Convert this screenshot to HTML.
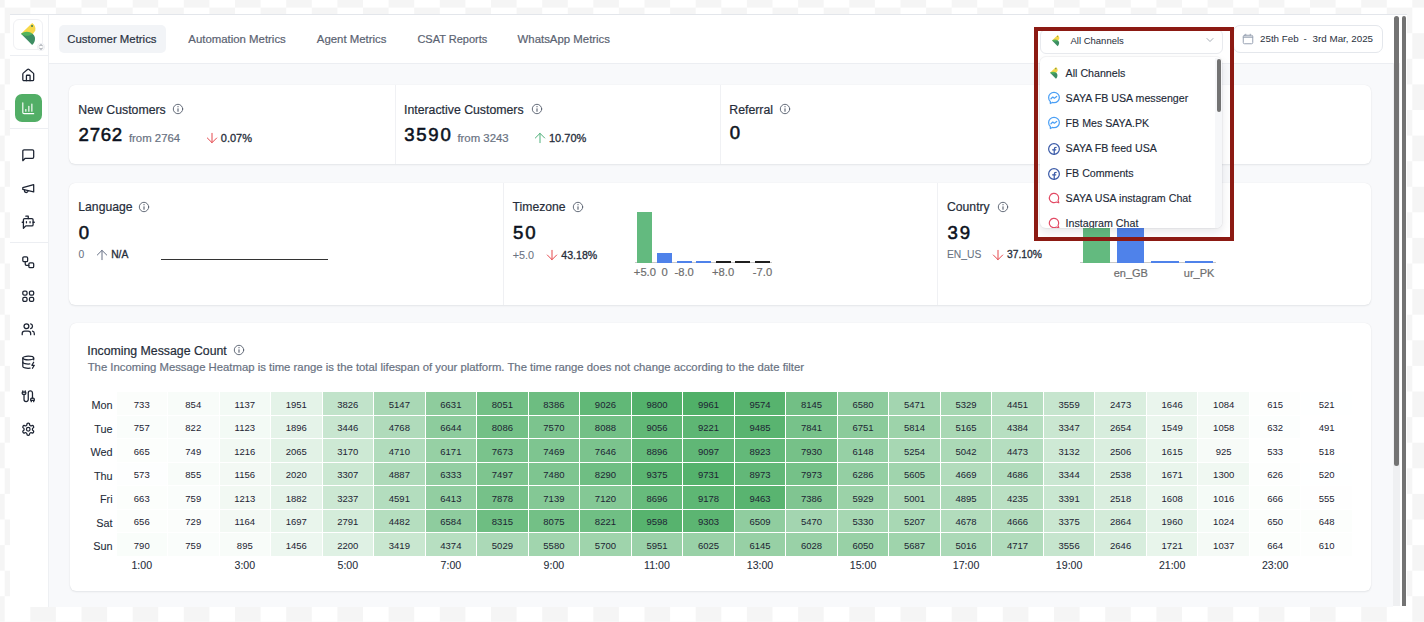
<!DOCTYPE html>
<html><head><meta charset="utf-8"><title>Customer Metrics</title>
<style>
*{margin:0;padding:0;box-sizing:border-box}
html,body{width:1424px;height:622px;overflow:hidden}
body{position:relative;font-family:"Liberation Sans",sans-serif;background-color:#fff;
background-image:conic-gradient(transparent 25%,#f5f5f5 0 50%,transparent 0 75%,#f5f5f5 0);
background-size:51.2px 51.2px;background-position:4.7px 7.6px}
.b{position:absolute}
.t{position:absolute;white-space:nowrap;line-height:1}
svg{position:absolute;overflow:visible}
</style></head><body>

<div class="b" style="left:9.60px;top:14.30px;width:1397.80px;height:592.60px;background:#fff;border-top:1px solid #e3e6eb"></div>
<div class="b" style="left:47.90px;top:15.30px;width:1.00px;height:591.60px;background:#eef0f3"></div>
<div class="b" style="left:48.90px;top:63.50px;width:1343.90px;height:543.50px;background:#f8f9fb"></div>
<div class="b" style="left:48.90px;top:62.80px;width:1343.90px;height:1.00px;background:#eceef2"></div>
<div class="b" style="left:1392.80px;top:63.00px;width:7.10px;height:543.40px;background:#eff0f2"></div>
<div class="b" style="left:1394.00px;top:16.30px;width:5.00px;height:449.40px;background:#737373;border-radius:2.5px"></div>
<div class="b" style="left:1401.60px;top:16.30px;width:4.70px;height:590.10px;background:#737373;border-radius:2.4px 2.4px 0 0"></div>
<div class="b" style="left:9.60px;top:55.00px;width:38.30px;height:1.00px;background:#eceef2"></div>
<div class="b" style="left:9.60px;top:128.00px;width:38.30px;height:1.00px;background:#eceef2"></div>
<div class="b" style="left:9.60px;top:241.90px;width:38.30px;height:1.00px;background:#eceef2"></div>
<div class="b" style="left:13.40px;top:19.20px;width:29.40px;height:30.50px;background:#fff;border:1px solid #f0f1f4;border-radius:6px"></div>
<svg style="left:20.90px;top:22.90px" width="23.00" height="23.00" viewBox="0 0 24 24"><path d="M11.7 0 C14.2 1.6 15.6 5 14.9 7.6 C14.4 9.2 13.2 10.5 12.2 11.5 L0 11.3 Z" fill="#f7d84a"/><path d="M0 11.3 L11.7 23 C14.6 20.5 15 17 14.4 14.6 C14 13.2 13.2 12.2 12.2 11.5 Z" fill="#3d8d63"/><path d="M0 11.3 C3.5 8.6 8.5 8.2 12.2 11.5 C8.6 14 3.6 14.2 0 11.3 Z" fill="#52b35c"/><circle cx="11.5" cy="3.2" r="1.0" fill="#2e7a5c"/></svg>
<div class="b" style="left:36.50px;top:42.90px;width:8.40px;height:8.40px;background:#fff;border:1px solid #eceef2;border-radius:50%"></div>
<svg style="left:36.70px;top:43.10px" width="8" height="8" viewBox="0 0 8 8" fill="none" stroke="#5d6573" stroke-width="0.75" stroke-linecap="round" stroke-linejoin="round" ><path d="M2.6 3.0L4 1.5L5.4 3.0"/><path d="M2.6 5.0L4 6.5L5.4 5.0"/></svg>
<svg style="left:20.95px;top:67.75px" width="14.5" height="14.5" viewBox="0 0 24 24" fill="none" stroke="#1d2433" stroke-width="2.1" stroke-linecap="round" stroke-linejoin="round" ><path d="M15 21v-8a1 1 0 0 0-1-1h-4a1 1 0 0 0-1 1v8"/><path d="M3 10a2 2 0 0 1 .709-1.528l7-5.999a2 2 0 0 1 2.582 0l7 5.999A2 2 0 0 1 21 10v9a2 2 0 0 1-2 2H5a2 2 0 0 1-2-2z"/></svg>
<div class="b" style="left:14.50px;top:94.40px;width:27.30px;height:27.40px;background:#52ae66;border-radius:7px"></div>
<svg style="left:21.05px;top:100.95px" width="14.5" height="14.5" viewBox="0 0 24 24" fill="none" stroke="#fff" stroke-width="1.9" stroke-linecap="round" stroke-linejoin="round" ><path d="M3 3v16a2 2 0 0 0 2 2h16"/><path d="M18 17V5"/><path d="M13 17V9"/><path d="M8 17v-3"/></svg>
<svg style="left:20.95px;top:147.65px" width="14.5" height="14.5" viewBox="0 0 24 24" fill="none" stroke="#1d2433" stroke-width="2.1" stroke-linecap="round" stroke-linejoin="round" ><path d="M21 15a2 2 0 0 1-2 2H7l-4 4V5a2 2 0 0 1 2-2h14a2 2 0 0 1 2 2z"/></svg>
<svg style="left:20.95px;top:181.35px" width="14.5" height="14.5" viewBox="0 0 24 24" fill="none" stroke="#1d2433" stroke-width="2.1" stroke-linecap="round" stroke-linejoin="round" ><path d="m3 11 18-5v12L3 14v-3z"/><path d="M11.6 16.8a3 3 0 1 1-5.8-1.6"/></svg>
<svg style="left:20.95px;top:215.05px" width="14.5" height="14.5" viewBox="0 0 24 24" fill="none" stroke="#1d2433" stroke-width="2.1" stroke-linecap="round" stroke-linejoin="round" ><path d="M12 6V2H8"/><path d="m8 18-4 4V8a2 2 0 0 1 2-2h12a2 2 0 0 1 2 2v8a2 2 0 0 1-2 2Z"/><path d="M2 12h2"/><path d="M9 11v2"/><path d="M15 11v2"/><path d="M20 12h2"/></svg>
<svg style="left:20.95px;top:254.75px" width="14.5" height="14.5" viewBox="0 0 24 24" fill="none" stroke="#1d2433" stroke-width="2.1" stroke-linecap="round" stroke-linejoin="round" ><rect width="8" height="8" x="3" y="3" rx="2"/><path d="M7 11v4a2 2 0 0 0 2 2h4"/><rect width="8" height="8" x="13" y="13" rx="2"/></svg>
<svg style="left:20.95px;top:288.50px" width="14.5" height="14.5" viewBox="0 0 24 24" fill="none" stroke="#1d2433" stroke-width="2.1" stroke-linecap="round" stroke-linejoin="round" ><rect width="7" height="6.4" x="3" y="3.6" rx="2.2"/><rect width="7" height="6.4" x="14" y="3.6" rx="2.2"/><rect width="7" height="6.4" x="14" y="14" rx="2.2"/><rect width="7" height="6.4" x="3" y="14" rx="2.2"/></svg>
<svg style="left:20.95px;top:321.75px" width="14.5" height="14.5" viewBox="0 0 24 24" fill="none" stroke="#1d2433" stroke-width="2.1" stroke-linecap="round" stroke-linejoin="round" ><path d="M16 21v-2a4 4 0 0 0-4-4H6a4 4 0 0 0-4 4v2"/><circle cx="9" cy="7" r="4"/><path d="M22 21v-2a4 4 0 0 0-3-3.87"/><path d="M16 3.13a4 4 0 0 1 0 7.75"/></svg>
<svg style="left:20.95px;top:355.35px" width="14.5" height="14.5" viewBox="0 0 24 24" fill="none" stroke="#1d2433" stroke-width="2.1" stroke-linecap="round" stroke-linejoin="round" ><ellipse cx="12" cy="5" rx="9" ry="3"/><path d="M3 5V19A9 3 0 0 0 15 21.84"/><path d="M21 5V8"/><path d="M21 12L18 17H22L19 22"/><path d="M3 12A9 3 0 0 0 14.59 14.87"/></svg>
<svg style="left:20.95px;top:389.05px" width="14.5" height="14.5" viewBox="0 0 24 24" fill="none" stroke="#1d2433" stroke-width="2.1" stroke-linecap="round" stroke-linejoin="round" ><path d="M17 21v-2a1 1 0 0 1-1-1v-1a2 2 0 0 1 2-2h2a2 2 0 0 1 2 2v1a1 1 0 0 1-1 1"/><path d="M19 15V6.5a1 1 0 0 0-7 0v11a1 1 0 0 1-7 0V9"/><path d="M21 21v-2h-4"/><path d="M3 5h4V3"/><path d="M7 5a1 1 0 0 1 1 1v1a2 2 0 0 1-2 2H4a2 2 0 0 1-2-2V6a1 1 0 0 1 1-1V3"/></svg>
<svg style="left:20.95px;top:421.55px" width="14.5" height="14.5" viewBox="0 0 24 24" fill="none" stroke="#1d2433" stroke-width="2.1" stroke-linecap="round" stroke-linejoin="round" ><path d="M12.22 2h-.44a2 2 0 0 0-2 2v.18a2 2 0 0 1-1 1.73l-.43.25a2 2 0 0 1-2 0l-.15-.08a2 2 0 0 0-2.73.73l-.22.38a2 2 0 0 0 .73 2.73l.15.1a2 2 0 0 1 1 1.72v.51a2 2 0 0 1-1 1.74l-.15.09a2 2 0 0 0-.73 2.73l.22.38a2 2 0 0 0 2.73.73l.15-.08a2 2 0 0 1 2 0l.43.25a2 2 0 0 1 1 1.73V20a2 2 0 0 0 2 2h.44a2 2 0 0 0 2-2v-.18a2 2 0 0 1 1-1.73l.43-.25a2 2 0 0 1 2 0l.15.08a2 2 0 0 0 2.73-.73l.22-.39a2 2 0 0 0-.73-2.73l-.15-.08a2 2 0 0 1-1-1.74v-.5a2 2 0 0 1 1-1.74l.15-.09a2 2 0 0 0 .73-2.73l-.22-.38a2 2 0 0 0-2.73-.73l-.15.08a2 2 0 0 1-2 0l-.43-.25a2 2 0 0 1-1-1.73V4a2 2 0 0 0-2-2z"/><circle cx="12" cy="12" r="3"/></svg>
<div class="b" style="left:59.20px;top:25.20px;width:107.10px;height:27.70px;background:#f2f4f7;border-radius:5px"></div>
<div class="t" style="left:67.30px;top:34.05px;font-size:11.4px;color:#2a3242;font-weight:400;-webkit-text-stroke:0.20px currentColor;">Customer Metrics</div>
<div class="t" style="left:188.30px;top:34.05px;font-size:11.4px;color:#5a6271;font-weight:400;-webkit-text-stroke:0.20px currentColor;">Automation Metrics</div>
<div class="t" style="left:316.80px;top:34.05px;font-size:11.4px;color:#5a6271;font-weight:400;-webkit-text-stroke:0.20px currentColor;">Agent Metrics</div>
<div class="t" style="left:417.40px;top:34.39px;font-size:11.0px;color:#5a6271;font-weight:400;-webkit-text-stroke:0.20px currentColor;">CSAT Reports</div>
<div class="t" style="left:517.60px;top:34.05px;font-size:11.4px;color:#5a6271;font-weight:400;-webkit-text-stroke:0.20px currentColor;">WhatsApp Metrics</div>
<div class="b" style="left:1233.30px;top:25.30px;width:150.10px;height:27.40px;background:#fff;border:1px solid #e4e7ec;border-radius:7px"></div>
<div class="t" style="left:1260.00px;top:34.40px;font-size:9.8px;color:#2a3140;font-weight:400;">25th Feb</div>
<div class="t" style="left:1303.50px;top:34.40px;font-size:9.8px;color:#2a3140;font-weight:400;">-</div>
<div class="t" style="left:1312.60px;top:34.40px;font-size:9.8px;color:#2a3140;font-weight:400;">3rd Mar, 2025</div>
<svg style="left:1241.75px;top:33.05px" width="12" height="12" viewBox="0 0 24 24" fill="none" stroke="#98a2b3" stroke-width="2.0" stroke-linecap="round" stroke-linejoin="round" ><rect x="2.5" y="4.5" width="19" height="17" rx="2.5"/><path d="M3 8.3h18" stroke-width="2.8"/><path d="M7.5 2.4v2"/><path d="M16.5 2.4v2"/></svg>
<div class="b" style="left:69.30px;top:85.30px;width:1301.70px;height:79.00px;background:#fff;border-radius:6px;box-shadow:0 1px 2px rgba(16,24,40,0.08),0 0 1px rgba(16,24,40,0.10)"></div>
<div class="b" style="left:394.70px;top:85.30px;width:1.00px;height:79.00px;background:#f0f1f4"></div>
<div class="b" style="left:720.10px;top:85.30px;width:1.00px;height:79.00px;background:#f0f1f4"></div>
<div class="b" style="left:1045.50px;top:85.30px;width:1.00px;height:79.00px;background:#f0f1f4"></div>
<div class="b" style="left:69.30px;top:182.80px;width:1301.70px;height:121.80px;background:#fff;border-radius:6px;box-shadow:0 1px 2px rgba(16,24,40,0.08),0 0 1px rgba(16,24,40,0.10)"></div>
<div class="b" style="left:503.00px;top:182.80px;width:1.00px;height:121.80px;background:#eff0f3"></div>
<div class="b" style="left:937.00px;top:182.80px;width:1.00px;height:121.80px;background:#f0f1f4"></div>
<div class="b" style="left:69.60px;top:322.60px;width:1301.40px;height:268.40px;background:#fff;border-radius:6px;box-shadow:0 1px 2px rgba(16,24,40,0.08),0 0 1px rgba(16,24,40,0.10)"></div>
<div class="t" style="left:78.30px;top:103.69px;font-size:12.3px;color:#262d3a;font-weight:400;-webkit-text-stroke:0.20px currentColor;">New Customers</div>
<div class="t" style="left:404.00px;top:103.69px;font-size:12.3px;color:#262d3a;font-weight:400;-webkit-text-stroke:0.20px currentColor;">Interactive Customers</div>
<div class="t" style="left:729.30px;top:103.69px;font-size:12.3px;color:#262d3a;font-weight:400;-webkit-text-stroke:0.20px currentColor;">Referral</div>
<div class="t" style="left:78.60px;top:126.36px;font-size:18.6px;color:#0c1220;font-weight:400;-webkit-text-stroke:0.55px currentColor;letter-spacing:0.75px">2762</div>
<div class="t" style="left:128.90px;top:132.75px;font-size:11.4px;color:#697282;font-weight:400;-webkit-text-stroke:0.20px currentColor;">from 2764</div>
<div class="t" style="left:220.80px;top:132.79px;font-size:11px;color:#262d3a;font-weight:400;-webkit-text-stroke:0.30px currentColor;">0.07%</div>
<div class="t" style="left:404.20px;top:126.36px;font-size:18.6px;color:#0c1220;font-weight:400;-webkit-text-stroke:0.55px currentColor;letter-spacing:1.75px">3590</div>
<div class="t" style="left:457.40px;top:132.65px;font-size:11.4px;color:#697282;font-weight:400;-webkit-text-stroke:0.20px currentColor;">from 3243</div>
<div class="t" style="left:549.00px;top:132.79px;font-size:11px;color:#262d3a;font-weight:400;-webkit-text-stroke:0.30px currentColor;">10.70%</div>
<div class="t" style="left:729.80px;top:123.66px;font-size:18.6px;color:#0c1220;font-weight:400;-webkit-text-stroke:0.55px currentColor;">0</div>
<div class="t" style="left:78.30px;top:201.47px;font-size:12.2px;color:#262d3a;font-weight:400;-webkit-text-stroke:0.20px currentColor;">Language</div>
<div class="t" style="left:512.60px;top:201.47px;font-size:12.2px;color:#262d3a;font-weight:400;-webkit-text-stroke:0.20px currentColor;">Timezone</div>
<div class="t" style="left:947.00px;top:201.47px;font-size:12.2px;color:#262d3a;font-weight:400;-webkit-text-stroke:0.20px currentColor;">Country</div>
<div class="t" style="left:78.80px;top:223.96px;font-size:18.6px;color:#0c1220;font-weight:400;-webkit-text-stroke:0.55px currentColor;letter-spacing:0px">0</div>
<div class="t" style="left:513.00px;top:223.96px;font-size:18.6px;color:#0c1220;font-weight:400;-webkit-text-stroke:0.55px currentColor;letter-spacing:1.9px">50</div>
<div class="t" style="left:947.40px;top:223.96px;font-size:18.6px;color:#0c1220;font-weight:400;-webkit-text-stroke:0.55px currentColor;letter-spacing:1.9px">39</div>
<div class="t" style="left:78.50px;top:250.28px;font-size:10.3px;color:#697282;font-weight:400;-webkit-text-stroke:0.08px currentColor;">0</div>
<div class="t" style="left:111.20px;top:249.78px;font-size:10.3px;color:#262d3a;font-weight:400;-webkit-text-stroke:0.30px currentColor;">N/A</div>
<div class="t" style="left:512.80px;top:249.66px;font-size:10.8px;color:#697282;font-weight:400;-webkit-text-stroke:0.08px currentColor;">+5.0</div>
<div class="t" style="left:561.30px;top:249.63px;font-size:10.6px;color:#262d3a;font-weight:400;-webkit-text-stroke:0.30px currentColor;">43.18%</div>
<div class="t" style="left:947.00px;top:249.78px;font-size:10.3px;color:#697282;font-weight:400;-webkit-text-stroke:0.08px currentColor;">EN_US</div>
<div class="t" style="left:1007.00px;top:249.78px;font-size:10.3px;color:#262d3a;font-weight:400;-webkit-text-stroke:0.30px currentColor;">37.10%</div>
<div class="b" style="left:161.00px;top:258.70px;width:166.80px;height:1.40px;background:#333"></div>
<div class="b" style="left:634.80px;top:262.20px;width:136.90px;height:1.00px;background:#c8c8c8"></div>
<div class="b" style="left:637.30px;top:211.90px;width:15.20px;height:51.00px;background:#63ba7f"></div>
<div class="b" style="left:656.90px;top:253.30px;width:15.20px;height:9.60px;background:#4f82ea"></div>
<div class="b" style="left:676.50px;top:261.40px;width:15.20px;height:1.50px;background:#4f82ea"></div>
<div class="b" style="left:695.90px;top:261.40px;width:15.20px;height:1.50px;background:#4f82ea"></div>
<div class="b" style="left:715.50px;top:261.40px;width:15.20px;height:1.50px;background:#1f1f1f"></div>
<div class="b" style="left:735.30px;top:261.40px;width:15.20px;height:1.50px;background:#1f1f1f"></div>
<div class="b" style="left:754.90px;top:261.40px;width:15.20px;height:1.50px;background:#1f1f1f"></div>
<div class="t" style="left:584.90px;width:120px;text-align:center;top:267.32px;font-size:11.2px;color:#6e6e6e;font-weight:400;-webkit-text-stroke:0.20px currentColor;">+5.0</div>
<div class="t" style="left:604.50px;width:120px;text-align:center;top:267.32px;font-size:11.2px;color:#6e6e6e;font-weight:400;-webkit-text-stroke:0.20px currentColor;">0</div>
<div class="t" style="left:624.10px;width:120px;text-align:center;top:267.32px;font-size:11.2px;color:#6e6e6e;font-weight:400;-webkit-text-stroke:0.20px currentColor;">-8.0</div>
<div class="t" style="left:663.10px;width:120px;text-align:center;top:267.32px;font-size:11.2px;color:#6e6e6e;font-weight:400;-webkit-text-stroke:0.20px currentColor;">+8.0</div>
<div class="t" style="left:702.50px;width:120px;text-align:center;top:267.32px;font-size:11.2px;color:#6e6e6e;font-weight:400;-webkit-text-stroke:0.20px currentColor;">-7.0</div>
<div class="b" style="left:1079.50px;top:262.20px;width:136.50px;height:1.00px;background:#c8c8c8"></div>
<div class="b" style="left:1082.70px;top:200.00px;width:27.40px;height:62.90px;background:#63ba7f"></div>
<div class="b" style="left:1117.10px;top:200.00px;width:27.40px;height:62.90px;background:#4f82ea"></div>
<div class="b" style="left:1151.20px;top:261.40px;width:27.40px;height:1.50px;background:#4f82ea"></div>
<div class="b" style="left:1185.40px;top:261.40px;width:27.40px;height:1.50px;background:#4f82ea"></div>
<div class="t" style="left:1070.80px;width:120px;text-align:center;top:267.69px;font-size:11.0px;color:#6e6e6e;font-weight:400;-webkit-text-stroke:0.20px currentColor;">en_GB</div>
<div class="t" style="left:1139.10px;width:120px;text-align:center;top:267.69px;font-size:11.0px;color:#6e6e6e;font-weight:400;-webkit-text-stroke:0.20px currentColor;">ur_PK</div>
<div class="t" style="left:87.30px;top:345.09px;font-size:12.3px;color:#262d3a;font-weight:400;-webkit-text-stroke:0.20px currentColor;">Incoming Message Count</div>
<div class="t" style="left:87.70px;top:361.51px;font-size:11.33px;color:#697282;font-weight:400;-webkit-text-stroke:0.20px currentColor;">The Incoming Message Heatmap is time range is the total lifespan of your platform. The time range does not change according to the date filter</div>
<div class="t" style="left:-7.40px;width:120px;text-align:right;top:400.22px;font-size:10.85px;color:#262d3a;font-weight:400;-webkit-text-stroke:0.08px currentColor;">Mon</div>
<div class="b" style="left:116.50px;top:392.00px;width:50.52px;height:22.50px;background:rgb(251, 253, 251)"></div>
<div class="t" style="left:81.76px;width:120px;text-align:center;top:399.76px;font-size:9.5px;color:#1d2433;font-weight:400;">733</div>
<div class="b" style="left:168.02px;top:392.00px;width:50.52px;height:22.50px;background:rgb(248, 252, 249)"></div>
<div class="t" style="left:133.28px;width:120px;text-align:center;top:399.76px;font-size:9.5px;color:#1d2433;font-weight:400;">854</div>
<div class="b" style="left:219.54px;top:392.00px;width:50.52px;height:22.50px;background:rgb(243, 250, 245)"></div>
<div class="t" style="left:184.80px;width:120px;text-align:center;top:399.76px;font-size:9.5px;color:#1d2433;font-weight:400;">1137</div>
<div class="b" style="left:271.06px;top:392.00px;width:50.52px;height:22.50px;background:rgb(228, 243, 232)"></div>
<div class="t" style="left:236.32px;width:120px;text-align:center;top:399.76px;font-size:9.5px;color:#1d2433;font-weight:400;">1951</div>
<div class="b" style="left:322.58px;top:392.00px;width:50.52px;height:22.50px;background:rgb(193, 227, 202)"></div>
<div class="t" style="left:287.84px;width:120px;text-align:center;top:399.76px;font-size:9.5px;color:#1d2433;font-weight:400;">3826</div>
<div class="b" style="left:374.10px;top:392.00px;width:50.52px;height:22.50px;background:rgb(169, 216, 181)"></div>
<div class="t" style="left:339.36px;width:120px;text-align:center;top:399.76px;font-size:9.5px;color:#1d2433;font-weight:400;">5147</div>
<div class="b" style="left:425.62px;top:392.00px;width:50.52px;height:22.50px;background:rgb(142, 204, 157)"></div>
<div class="t" style="left:390.88px;width:120px;text-align:center;top:399.76px;font-size:9.5px;color:#1d2433;font-weight:400;">6631</div>
<div class="b" style="left:477.14px;top:392.00px;width:50.52px;height:22.50px;background:rgb(115, 192, 134)"></div>
<div class="t" style="left:442.40px;width:120px;text-align:center;top:399.76px;font-size:9.5px;color:#1d2433;font-weight:400;">8051</div>
<div class="b" style="left:528.66px;top:392.00px;width:50.52px;height:22.50px;background:rgb(109, 189, 129)"></div>
<div class="t" style="left:493.92px;width:120px;text-align:center;top:399.76px;font-size:9.5px;color:#1d2433;font-weight:400;">8386</div>
<div class="b" style="left:580.18px;top:392.00px;width:50.52px;height:22.50px;background:rgb(97, 184, 119)"></div>
<div class="t" style="left:545.44px;width:120px;text-align:center;top:399.76px;font-size:9.5px;color:#1d2433;font-weight:400;">9026</div>
<div class="b" style="left:631.70px;top:392.00px;width:50.52px;height:22.50px;background:rgb(83, 177, 107)"></div>
<div class="t" style="left:596.96px;width:120px;text-align:center;top:399.76px;font-size:9.5px;color:#1d2433;font-weight:400;">9800</div>
<div class="b" style="left:683.22px;top:392.00px;width:50.52px;height:22.50px;background:rgb(80, 176, 104)"></div>
<div class="t" style="left:648.48px;width:120px;text-align:center;top:399.76px;font-size:9.5px;color:#1d2433;font-weight:400;">9961</div>
<div class="b" style="left:734.74px;top:392.00px;width:50.52px;height:22.50px;background:rgb(87, 179, 110)"></div>
<div class="t" style="left:700.00px;width:120px;text-align:center;top:399.76px;font-size:9.5px;color:#1d2433;font-weight:400;">9574</div>
<div class="b" style="left:786.26px;top:392.00px;width:50.52px;height:22.50px;background:rgb(114, 191, 133)"></div>
<div class="t" style="left:751.52px;width:120px;text-align:center;top:399.76px;font-size:9.5px;color:#1d2433;font-weight:400;">8145</div>
<div class="b" style="left:837.78px;top:392.00px;width:50.52px;height:22.50px;background:rgb(142, 204, 158)"></div>
<div class="t" style="left:803.04px;width:120px;text-align:center;top:399.76px;font-size:9.5px;color:#1d2433;font-weight:400;">6580</div>
<div class="b" style="left:889.30px;top:392.00px;width:50.52px;height:22.50px;background:rgb(163, 213, 176)"></div>
<div class="t" style="left:854.56px;width:120px;text-align:center;top:399.76px;font-size:9.5px;color:#1d2433;font-weight:400;">5471</div>
<div class="b" style="left:940.82px;top:392.00px;width:50.52px;height:22.50px;background:rgb(166, 215, 178)"></div>
<div class="t" style="left:906.08px;width:120px;text-align:center;top:399.76px;font-size:9.5px;color:#1d2433;font-weight:400;">5329</div>
<div class="b" style="left:992.34px;top:392.00px;width:50.52px;height:22.50px;background:rgb(182, 222, 192)"></div>
<div class="t" style="left:957.60px;width:120px;text-align:center;top:399.76px;font-size:9.5px;color:#1d2433;font-weight:400;">4451</div>
<div class="b" style="left:1043.86px;top:392.00px;width:50.52px;height:22.50px;background:rgb(198, 229, 206)"></div>
<div class="t" style="left:1009.12px;width:120px;text-align:center;top:399.76px;font-size:9.5px;color:#1d2433;font-weight:400;">3559</div>
<div class="b" style="left:1095.38px;top:392.00px;width:50.52px;height:22.50px;background:rgb(218, 238, 223)"></div>
<div class="t" style="left:1060.64px;width:120px;text-align:center;top:399.76px;font-size:9.5px;color:#1d2433;font-weight:400;">2473</div>
<div class="b" style="left:1146.90px;top:392.00px;width:50.52px;height:22.50px;background:rgb(234, 245, 237)"></div>
<div class="t" style="left:1112.16px;width:120px;text-align:center;top:399.76px;font-size:9.5px;color:#1d2433;font-weight:400;">1646</div>
<div class="b" style="left:1198.42px;top:392.00px;width:50.52px;height:22.50px;background:rgb(244, 250, 246)"></div>
<div class="t" style="left:1163.68px;width:120px;text-align:center;top:399.76px;font-size:9.5px;color:#1d2433;font-weight:400;">1084</div>
<div class="b" style="left:1249.94px;top:392.00px;width:50.52px;height:22.50px;background:rgb(253, 254, 253)"></div>
<div class="t" style="left:1215.20px;width:120px;text-align:center;top:399.76px;font-size:9.5px;color:#1d2433;font-weight:400;">615</div>
<div class="b" style="left:1301.46px;top:392.00px;width:50.52px;height:22.50px;background:rgb(254, 255, 255)"></div>
<div class="t" style="left:1266.72px;width:120px;text-align:center;top:399.76px;font-size:9.5px;color:#1d2433;font-weight:400;">521</div>
<div class="t" style="left:-7.40px;width:120px;text-align:right;top:423.72px;font-size:10.85px;color:#262d3a;font-weight:400;-webkit-text-stroke:0.08px currentColor;">Tue</div>
<div class="b" style="left:116.50px;top:415.50px;width:50.52px;height:22.50px;background:rgb(250, 253, 251)"></div>
<div class="t" style="left:81.76px;width:120px;text-align:center;top:423.26px;font-size:9.5px;color:#1d2433;font-weight:400;">757</div>
<div class="b" style="left:168.02px;top:415.50px;width:50.52px;height:22.50px;background:rgb(249, 252, 250)"></div>
<div class="t" style="left:133.28px;width:120px;text-align:center;top:423.26px;font-size:9.5px;color:#1d2433;font-weight:400;">822</div>
<div class="b" style="left:219.54px;top:415.50px;width:50.52px;height:22.50px;background:rgb(243, 250, 245)"></div>
<div class="t" style="left:184.80px;width:120px;text-align:center;top:423.26px;font-size:9.5px;color:#1d2433;font-weight:400;">1123</div>
<div class="b" style="left:271.06px;top:415.50px;width:50.52px;height:22.50px;background:rgb(229, 243, 233)"></div>
<div class="t" style="left:236.32px;width:120px;text-align:center;top:423.26px;font-size:9.5px;color:#1d2433;font-weight:400;">1896</div>
<div class="b" style="left:322.58px;top:415.50px;width:50.52px;height:22.50px;background:rgb(200, 230, 208)"></div>
<div class="t" style="left:287.84px;width:120px;text-align:center;top:423.26px;font-size:9.5px;color:#1d2433;font-weight:400;">3446</div>
<div class="b" style="left:374.10px;top:415.50px;width:50.52px;height:22.50px;background:rgb(176, 219, 187)"></div>
<div class="t" style="left:339.36px;width:120px;text-align:center;top:423.26px;font-size:9.5px;color:#1d2433;font-weight:400;">4768</div>
<div class="b" style="left:425.62px;top:415.50px;width:50.52px;height:22.50px;background:rgb(141, 204, 157)"></div>
<div class="t" style="left:390.88px;width:120px;text-align:center;top:423.26px;font-size:9.5px;color:#1d2433;font-weight:400;">6644</div>
<div class="b" style="left:477.14px;top:415.50px;width:50.52px;height:22.50px;background:rgb(115, 192, 134)"></div>
<div class="t" style="left:442.40px;width:120px;text-align:center;top:423.26px;font-size:9.5px;color:#1d2433;font-weight:400;">8086</div>
<div class="b" style="left:528.66px;top:415.50px;width:50.52px;height:22.50px;background:rgb(124, 196, 142)"></div>
<div class="t" style="left:493.92px;width:120px;text-align:center;top:423.26px;font-size:9.5px;color:#1d2433;font-weight:400;">7570</div>
<div class="b" style="left:580.18px;top:415.50px;width:50.52px;height:22.50px;background:rgb(115, 192, 134)"></div>
<div class="t" style="left:545.44px;width:120px;text-align:center;top:423.26px;font-size:9.5px;color:#1d2433;font-weight:400;">8088</div>
<div class="b" style="left:631.70px;top:415.50px;width:50.52px;height:22.50px;background:rgb(97, 184, 118)"></div>
<div class="t" style="left:596.96px;width:120px;text-align:center;top:423.26px;font-size:9.5px;color:#1d2433;font-weight:400;">9056</div>
<div class="b" style="left:683.22px;top:415.50px;width:50.52px;height:22.50px;background:rgb(94, 182, 116)"></div>
<div class="t" style="left:648.48px;width:120px;text-align:center;top:423.26px;font-size:9.5px;color:#1d2433;font-weight:400;">9221</div>
<div class="b" style="left:734.74px;top:415.50px;width:50.52px;height:22.50px;background:rgb(89, 180, 112)"></div>
<div class="t" style="left:700.00px;width:120px;text-align:center;top:423.26px;font-size:9.5px;color:#1d2433;font-weight:400;">9485</div>
<div class="b" style="left:786.26px;top:415.50px;width:50.52px;height:22.50px;background:rgb(119, 194, 138)"></div>
<div class="t" style="left:751.52px;width:120px;text-align:center;top:423.26px;font-size:9.5px;color:#1d2433;font-weight:400;">7841</div>
<div class="b" style="left:837.78px;top:415.50px;width:50.52px;height:22.50px;background:rgb(139, 203, 155)"></div>
<div class="t" style="left:803.04px;width:120px;text-align:center;top:423.26px;font-size:9.5px;color:#1d2433;font-weight:400;">6751</div>
<div class="b" style="left:889.30px;top:415.50px;width:50.52px;height:22.50px;background:rgb(157, 211, 170)"></div>
<div class="t" style="left:854.56px;width:120px;text-align:center;top:423.26px;font-size:9.5px;color:#1d2433;font-weight:400;">5814</div>
<div class="b" style="left:940.82px;top:415.50px;width:50.52px;height:22.50px;background:rgb(169, 216, 180)"></div>
<div class="t" style="left:906.08px;width:120px;text-align:center;top:423.26px;font-size:9.5px;color:#1d2433;font-weight:400;">5165</div>
<div class="b" style="left:992.34px;top:415.50px;width:50.52px;height:22.50px;background:rgb(183, 223, 193)"></div>
<div class="t" style="left:957.60px;width:120px;text-align:center;top:423.26px;font-size:9.5px;color:#1d2433;font-weight:400;">4384</div>
<div class="b" style="left:1043.86px;top:415.50px;width:50.52px;height:22.50px;background:rgb(202, 231, 209)"></div>
<div class="t" style="left:1009.12px;width:120px;text-align:center;top:423.26px;font-size:9.5px;color:#1d2433;font-weight:400;">3347</div>
<div class="b" style="left:1095.38px;top:415.50px;width:50.52px;height:22.50px;background:rgb(215, 237, 221)"></div>
<div class="t" style="left:1060.64px;width:120px;text-align:center;top:423.26px;font-size:9.5px;color:#1d2433;font-weight:400;">2654</div>
<div class="b" style="left:1146.90px;top:415.50px;width:50.52px;height:22.50px;background:rgb(235, 246, 238)"></div>
<div class="t" style="left:1112.16px;width:120px;text-align:center;top:423.26px;font-size:9.5px;color:#1d2433;font-weight:400;">1549</div>
<div class="b" style="left:1198.42px;top:415.50px;width:50.52px;height:22.50px;background:rgb(245, 250, 246)"></div>
<div class="t" style="left:1163.68px;width:120px;text-align:center;top:423.26px;font-size:9.5px;color:#1d2433;font-weight:400;">1058</div>
<div class="b" style="left:1249.94px;top:415.50px;width:50.52px;height:22.50px;background:rgb(252, 254, 253)"></div>
<div class="t" style="left:1215.20px;width:120px;text-align:center;top:423.26px;font-size:9.5px;color:#1d2433;font-weight:400;">632</div>
<div class="b" style="left:1301.46px;top:415.50px;width:50.52px;height:22.50px;background:rgb(255, 255, 255)"></div>
<div class="t" style="left:1266.72px;width:120px;text-align:center;top:423.26px;font-size:9.5px;color:#1d2433;font-weight:400;">491</div>
<div class="t" style="left:-7.40px;width:120px;text-align:right;top:447.22px;font-size:10.85px;color:#262d3a;font-weight:400;-webkit-text-stroke:0.08px currentColor;">Wed</div>
<div class="b" style="left:116.50px;top:439.00px;width:50.52px;height:22.50px;background:rgb(252, 254, 252)"></div>
<div class="t" style="left:81.76px;width:120px;text-align:center;top:446.76px;font-size:9.5px;color:#1d2433;font-weight:400;">665</div>
<div class="b" style="left:168.02px;top:439.00px;width:50.52px;height:22.50px;background:rgb(250, 253, 251)"></div>
<div class="t" style="left:133.28px;width:120px;text-align:center;top:446.76px;font-size:9.5px;color:#1d2433;font-weight:400;">749</div>
<div class="b" style="left:219.54px;top:439.00px;width:50.52px;height:22.50px;background:rgb(242, 249, 243)"></div>
<div class="t" style="left:184.80px;width:120px;text-align:center;top:446.76px;font-size:9.5px;color:#1d2433;font-weight:400;">1216</div>
<div class="b" style="left:271.06px;top:439.00px;width:50.52px;height:22.50px;background:rgb(226, 242, 230)"></div>
<div class="t" style="left:236.32px;width:120px;text-align:center;top:446.76px;font-size:9.5px;color:#1d2433;font-weight:400;">2065</div>
<div class="b" style="left:322.58px;top:439.00px;width:50.52px;height:22.50px;background:rgb(205, 233, 212)"></div>
<div class="t" style="left:287.84px;width:120px;text-align:center;top:446.76px;font-size:9.5px;color:#1d2433;font-weight:400;">3170</div>
<div class="b" style="left:374.10px;top:439.00px;width:50.52px;height:22.50px;background:rgb(177, 220, 188)"></div>
<div class="t" style="left:339.36px;width:120px;text-align:center;top:446.76px;font-size:9.5px;color:#1d2433;font-weight:400;">4710</div>
<div class="b" style="left:425.62px;top:439.00px;width:50.52px;height:22.50px;background:rgb(150, 208, 164)"></div>
<div class="t" style="left:390.88px;width:120px;text-align:center;top:446.76px;font-size:9.5px;color:#1d2433;font-weight:400;">6171</div>
<div class="b" style="left:477.14px;top:439.00px;width:50.52px;height:22.50px;background:rgb(122, 195, 140)"></div>
<div class="t" style="left:442.40px;width:120px;text-align:center;top:446.76px;font-size:9.5px;color:#1d2433;font-weight:400;">7673</div>
<div class="b" style="left:528.66px;top:439.00px;width:50.52px;height:22.50px;background:rgb(126, 197, 144)"></div>
<div class="t" style="left:493.92px;width:120px;text-align:center;top:446.76px;font-size:9.5px;color:#1d2433;font-weight:400;">7469</div>
<div class="b" style="left:580.18px;top:439.00px;width:50.52px;height:22.50px;background:rgb(123, 195, 141)"></div>
<div class="t" style="left:545.44px;width:120px;text-align:center;top:446.76px;font-size:9.5px;color:#1d2433;font-weight:400;">7646</div>
<div class="b" style="left:631.70px;top:439.00px;width:50.52px;height:22.50px;background:rgb(100, 185, 121)"></div>
<div class="t" style="left:596.96px;width:120px;text-align:center;top:446.76px;font-size:9.5px;color:#1d2433;font-weight:400;">8896</div>
<div class="b" style="left:683.22px;top:439.00px;width:50.52px;height:22.50px;background:rgb(96, 183, 118)"></div>
<div class="t" style="left:648.48px;width:120px;text-align:center;top:446.76px;font-size:9.5px;color:#1d2433;font-weight:400;">9097</div>
<div class="b" style="left:734.74px;top:439.00px;width:50.52px;height:22.50px;background:rgb(99, 185, 121)"></div>
<div class="t" style="left:700.00px;width:120px;text-align:center;top:446.76px;font-size:9.5px;color:#1d2433;font-weight:400;">8923</div>
<div class="b" style="left:786.26px;top:439.00px;width:50.52px;height:22.50px;background:rgb(118, 193, 136)"></div>
<div class="t" style="left:751.52px;width:120px;text-align:center;top:446.76px;font-size:9.5px;color:#1d2433;font-weight:400;">7930</div>
<div class="b" style="left:837.78px;top:439.00px;width:50.52px;height:22.50px;background:rgb(150, 208, 165)"></div>
<div class="t" style="left:803.04px;width:120px;text-align:center;top:446.76px;font-size:9.5px;color:#1d2433;font-weight:400;">6148</div>
<div class="b" style="left:889.30px;top:439.00px;width:50.52px;height:22.50px;background:rgb(167, 215, 179)"></div>
<div class="t" style="left:854.56px;width:120px;text-align:center;top:446.76px;font-size:9.5px;color:#1d2433;font-weight:400;">5254</div>
<div class="b" style="left:940.82px;top:439.00px;width:50.52px;height:22.50px;background:rgb(171, 217, 182)"></div>
<div class="t" style="left:906.08px;width:120px;text-align:center;top:446.76px;font-size:9.5px;color:#1d2433;font-weight:400;">5042</div>
<div class="b" style="left:992.34px;top:439.00px;width:50.52px;height:22.50px;background:rgb(181, 222, 192)"></div>
<div class="t" style="left:957.60px;width:120px;text-align:center;top:446.76px;font-size:9.5px;color:#1d2433;font-weight:400;">4473</div>
<div class="b" style="left:1043.86px;top:439.00px;width:50.52px;height:22.50px;background:rgb(206, 233, 213)"></div>
<div class="t" style="left:1009.12px;width:120px;text-align:center;top:446.76px;font-size:9.5px;color:#1d2433;font-weight:400;">3132</div>
<div class="b" style="left:1095.38px;top:439.00px;width:50.52px;height:22.50px;background:rgb(218, 238, 223)"></div>
<div class="t" style="left:1060.64px;width:120px;text-align:center;top:446.76px;font-size:9.5px;color:#1d2433;font-weight:400;">2506</div>
<div class="b" style="left:1146.90px;top:439.00px;width:50.52px;height:22.50px;background:rgb(234, 246, 237)"></div>
<div class="t" style="left:1112.16px;width:120px;text-align:center;top:446.76px;font-size:9.5px;color:#1d2433;font-weight:400;">1615</div>
<div class="b" style="left:1198.42px;top:439.00px;width:50.52px;height:22.50px;background:rgb(247, 251, 248)"></div>
<div class="t" style="left:1163.68px;width:120px;text-align:center;top:446.76px;font-size:9.5px;color:#1d2433;font-weight:400;">925</div>
<div class="b" style="left:1249.94px;top:439.00px;width:50.52px;height:22.50px;background:rgb(254, 255, 254)"></div>
<div class="t" style="left:1215.20px;width:120px;text-align:center;top:446.76px;font-size:9.5px;color:#1d2433;font-weight:400;">533</div>
<div class="b" style="left:1301.46px;top:439.00px;width:50.52px;height:22.50px;background:rgb(255, 255, 255)"></div>
<div class="t" style="left:1266.72px;width:120px;text-align:center;top:446.76px;font-size:9.5px;color:#1d2433;font-weight:400;">518</div>
<div class="t" style="left:-7.40px;width:120px;text-align:right;top:470.72px;font-size:10.85px;color:#262d3a;font-weight:400;-webkit-text-stroke:0.08px currentColor;">Thu</div>
<div class="b" style="left:116.50px;top:462.50px;width:50.52px;height:22.50px;background:rgb(253, 254, 254)"></div>
<div class="t" style="left:81.76px;width:120px;text-align:center;top:470.26px;font-size:9.5px;color:#1d2433;font-weight:400;">573</div>
<div class="b" style="left:168.02px;top:462.50px;width:50.52px;height:22.50px;background:rgb(248, 252, 249)"></div>
<div class="t" style="left:133.28px;width:120px;text-align:center;top:470.26px;font-size:9.5px;color:#1d2433;font-weight:400;">855</div>
<div class="b" style="left:219.54px;top:462.50px;width:50.52px;height:22.50px;background:rgb(243, 249, 244)"></div>
<div class="t" style="left:184.80px;width:120px;text-align:center;top:470.26px;font-size:9.5px;color:#1d2433;font-weight:400;">1156</div>
<div class="b" style="left:271.06px;top:462.50px;width:50.52px;height:22.50px;background:rgb(227, 242, 231)"></div>
<div class="t" style="left:236.32px;width:120px;text-align:center;top:470.26px;font-size:9.5px;color:#1d2433;font-weight:400;">2020</div>
<div class="b" style="left:322.58px;top:462.50px;width:50.52px;height:22.50px;background:rgb(203, 232, 210)"></div>
<div class="t" style="left:287.84px;width:120px;text-align:center;top:470.26px;font-size:9.5px;color:#1d2433;font-weight:400;">3307</div>
<div class="b" style="left:374.10px;top:462.50px;width:50.52px;height:22.50px;background:rgb(174, 218, 185)"></div>
<div class="t" style="left:339.36px;width:120px;text-align:center;top:470.26px;font-size:9.5px;color:#1d2433;font-weight:400;">4887</div>
<div class="b" style="left:425.62px;top:462.50px;width:50.52px;height:22.50px;background:rgb(147, 206, 162)"></div>
<div class="t" style="left:390.88px;width:120px;text-align:center;top:470.26px;font-size:9.5px;color:#1d2433;font-weight:400;">6333</div>
<div class="b" style="left:477.14px;top:462.50px;width:50.52px;height:22.50px;background:rgb(126, 197, 143)"></div>
<div class="t" style="left:442.40px;width:120px;text-align:center;top:470.26px;font-size:9.5px;color:#1d2433;font-weight:400;">7497</div>
<div class="b" style="left:528.66px;top:462.50px;width:50.52px;height:22.50px;background:rgb(126, 197, 144)"></div>
<div class="t" style="left:493.92px;width:120px;text-align:center;top:470.26px;font-size:9.5px;color:#1d2433;font-weight:400;">7480</div>
<div class="b" style="left:580.18px;top:462.50px;width:50.52px;height:22.50px;background:rgb(111, 190, 131)"></div>
<div class="t" style="left:545.44px;width:120px;text-align:center;top:470.26px;font-size:9.5px;color:#1d2433;font-weight:400;">8290</div>
<div class="b" style="left:631.70px;top:462.50px;width:50.52px;height:22.50px;background:rgb(91, 181, 113)"></div>
<div class="t" style="left:596.96px;width:120px;text-align:center;top:470.26px;font-size:9.5px;color:#1d2433;font-weight:400;">9375</div>
<div class="b" style="left:683.22px;top:462.50px;width:50.52px;height:22.50px;background:rgb(84, 178, 108)"></div>
<div class="t" style="left:648.48px;width:120px;text-align:center;top:470.26px;font-size:9.5px;color:#1d2433;font-weight:400;">9731</div>
<div class="b" style="left:734.74px;top:462.50px;width:50.52px;height:22.50px;background:rgb(98, 184, 120)"></div>
<div class="t" style="left:700.00px;width:120px;text-align:center;top:470.26px;font-size:9.5px;color:#1d2433;font-weight:400;">8973</div>
<div class="b" style="left:786.26px;top:462.50px;width:50.52px;height:22.50px;background:rgb(117, 193, 136)"></div>
<div class="t" style="left:751.52px;width:120px;text-align:center;top:470.26px;font-size:9.5px;color:#1d2433;font-weight:400;">7973</div>
<div class="b" style="left:837.78px;top:462.50px;width:50.52px;height:22.50px;background:rgb(148, 207, 163)"></div>
<div class="t" style="left:803.04px;width:120px;text-align:center;top:470.26px;font-size:9.5px;color:#1d2433;font-weight:400;">6286</div>
<div class="b" style="left:889.30px;top:462.50px;width:50.52px;height:22.50px;background:rgb(160, 212, 173)"></div>
<div class="t" style="left:854.56px;width:120px;text-align:center;top:470.26px;font-size:9.5px;color:#1d2433;font-weight:400;">5605</div>
<div class="b" style="left:940.82px;top:462.50px;width:50.52px;height:22.50px;background:rgb(178, 220, 188)"></div>
<div class="t" style="left:906.08px;width:120px;text-align:center;top:470.26px;font-size:9.5px;color:#1d2433;font-weight:400;">4669</div>
<div class="b" style="left:992.34px;top:462.50px;width:50.52px;height:22.50px;background:rgb(177, 220, 188)"></div>
<div class="t" style="left:957.60px;width:120px;text-align:center;top:470.26px;font-size:9.5px;color:#1d2433;font-weight:400;">4686</div>
<div class="b" style="left:1043.86px;top:462.50px;width:50.52px;height:22.50px;background:rgb(202, 231, 210)"></div>
<div class="t" style="left:1009.12px;width:120px;text-align:center;top:470.26px;font-size:9.5px;color:#1d2433;font-weight:400;">3344</div>
<div class="b" style="left:1095.38px;top:462.50px;width:50.52px;height:22.50px;background:rgb(217, 238, 222)"></div>
<div class="t" style="left:1060.64px;width:120px;text-align:center;top:470.26px;font-size:9.5px;color:#1d2433;font-weight:400;">2538</div>
<div class="b" style="left:1146.90px;top:462.50px;width:50.52px;height:22.50px;background:rgb(233, 245, 236)"></div>
<div class="t" style="left:1112.16px;width:120px;text-align:center;top:470.26px;font-size:9.5px;color:#1d2433;font-weight:400;">1671</div>
<div class="b" style="left:1198.42px;top:462.50px;width:50.52px;height:22.50px;background:rgb(240, 248, 242)"></div>
<div class="t" style="left:1163.68px;width:120px;text-align:center;top:470.26px;font-size:9.5px;color:#1d2433;font-weight:400;">1300</div>
<div class="b" style="left:1249.94px;top:462.50px;width:50.52px;height:22.50px;background:rgb(253, 254, 253)"></div>
<div class="t" style="left:1215.20px;width:120px;text-align:center;top:470.26px;font-size:9.5px;color:#1d2433;font-weight:400;">626</div>
<div class="b" style="left:1301.46px;top:462.50px;width:50.52px;height:22.50px;background:rgb(254, 255, 255)"></div>
<div class="t" style="left:1266.72px;width:120px;text-align:center;top:470.26px;font-size:9.5px;color:#1d2433;font-weight:400;">520</div>
<div class="t" style="left:-7.40px;width:120px;text-align:right;top:494.22px;font-size:10.85px;color:#262d3a;font-weight:400;-webkit-text-stroke:0.08px currentColor;">Fri</div>
<div class="b" style="left:116.50px;top:486.00px;width:50.52px;height:22.50px;background:rgb(252, 254, 252)"></div>
<div class="t" style="left:81.76px;width:120px;text-align:center;top:493.76px;font-size:9.5px;color:#1d2433;font-weight:400;">663</div>
<div class="b" style="left:168.02px;top:486.00px;width:50.52px;height:22.50px;background:rgb(250, 253, 251)"></div>
<div class="t" style="left:133.28px;width:120px;text-align:center;top:493.76px;font-size:9.5px;color:#1d2433;font-weight:400;">759</div>
<div class="b" style="left:219.54px;top:486.00px;width:50.52px;height:22.50px;background:rgb(242, 249, 243)"></div>
<div class="t" style="left:184.80px;width:120px;text-align:center;top:493.76px;font-size:9.5px;color:#1d2433;font-weight:400;">1213</div>
<div class="b" style="left:271.06px;top:486.00px;width:50.52px;height:22.50px;background:rgb(229, 243, 233)"></div>
<div class="t" style="left:236.32px;width:120px;text-align:center;top:493.76px;font-size:9.5px;color:#1d2433;font-weight:400;">1882</div>
<div class="b" style="left:322.58px;top:486.00px;width:50.52px;height:22.50px;background:rgb(204, 232, 211)"></div>
<div class="t" style="left:287.84px;width:120px;text-align:center;top:493.76px;font-size:9.5px;color:#1d2433;font-weight:400;">3237</div>
<div class="b" style="left:374.10px;top:486.00px;width:50.52px;height:22.50px;background:rgb(179, 221, 190)"></div>
<div class="t" style="left:339.36px;width:120px;text-align:center;top:493.76px;font-size:9.5px;color:#1d2433;font-weight:400;">4591</div>
<div class="b" style="left:425.62px;top:486.00px;width:50.52px;height:22.50px;background:rgb(146, 206, 161)"></div>
<div class="t" style="left:390.88px;width:120px;text-align:center;top:493.76px;font-size:9.5px;color:#1d2433;font-weight:400;">6413</div>
<div class="b" style="left:477.14px;top:486.00px;width:50.52px;height:22.50px;background:rgb(118, 193, 137)"></div>
<div class="t" style="left:442.40px;width:120px;text-align:center;top:493.76px;font-size:9.5px;color:#1d2433;font-weight:400;">7878</div>
<div class="b" style="left:528.66px;top:486.00px;width:50.52px;height:22.50px;background:rgb(132, 200, 149)"></div>
<div class="t" style="left:493.92px;width:120px;text-align:center;top:493.76px;font-size:9.5px;color:#1d2433;font-weight:400;">7139</div>
<div class="b" style="left:580.18px;top:486.00px;width:50.52px;height:22.50px;background:rgb(132, 200, 149)"></div>
<div class="t" style="left:545.44px;width:120px;text-align:center;top:493.76px;font-size:9.5px;color:#1d2433;font-weight:400;">7120</div>
<div class="b" style="left:631.70px;top:486.00px;width:50.52px;height:22.50px;background:rgb(103, 187, 124)"></div>
<div class="t" style="left:596.96px;width:120px;text-align:center;top:493.76px;font-size:9.5px;color:#1d2433;font-weight:400;">8696</div>
<div class="b" style="left:683.22px;top:486.00px;width:50.52px;height:22.50px;background:rgb(94, 183, 116)"></div>
<div class="t" style="left:648.48px;width:120px;text-align:center;top:493.76px;font-size:9.5px;color:#1d2433;font-weight:400;">9178</div>
<div class="b" style="left:734.74px;top:486.00px;width:50.52px;height:22.50px;background:rgb(89, 180, 112)"></div>
<div class="t" style="left:700.00px;width:120px;text-align:center;top:493.76px;font-size:9.5px;color:#1d2433;font-weight:400;">9463</div>
<div class="b" style="left:786.26px;top:486.00px;width:50.52px;height:22.50px;background:rgb(128, 197, 145)"></div>
<div class="t" style="left:751.52px;width:120px;text-align:center;top:493.76px;font-size:9.5px;color:#1d2433;font-weight:400;">7386</div>
<div class="b" style="left:837.78px;top:486.00px;width:50.52px;height:22.50px;background:rgb(155, 210, 168)"></div>
<div class="t" style="left:803.04px;width:120px;text-align:center;top:493.76px;font-size:9.5px;color:#1d2433;font-weight:400;">5929</div>
<div class="b" style="left:889.30px;top:486.00px;width:50.52px;height:22.50px;background:rgb(172, 217, 183)"></div>
<div class="t" style="left:854.56px;width:120px;text-align:center;top:493.76px;font-size:9.5px;color:#1d2433;font-weight:400;">5001</div>
<div class="b" style="left:940.82px;top:486.00px;width:50.52px;height:22.50px;background:rgb(174, 218, 185)"></div>
<div class="t" style="left:906.08px;width:120px;text-align:center;top:493.76px;font-size:9.5px;color:#1d2433;font-weight:400;">4895</div>
<div class="b" style="left:992.34px;top:486.00px;width:50.52px;height:22.50px;background:rgb(186, 224, 195)"></div>
<div class="t" style="left:957.60px;width:120px;text-align:center;top:493.76px;font-size:9.5px;color:#1d2433;font-weight:400;">4235</div>
<div class="b" style="left:1043.86px;top:486.00px;width:50.52px;height:22.50px;background:rgb(201, 231, 209)"></div>
<div class="t" style="left:1009.12px;width:120px;text-align:center;top:493.76px;font-size:9.5px;color:#1d2433;font-weight:400;">3391</div>
<div class="b" style="left:1095.38px;top:486.00px;width:50.52px;height:22.50px;background:rgb(218, 238, 223)"></div>
<div class="t" style="left:1060.64px;width:120px;text-align:center;top:493.76px;font-size:9.5px;color:#1d2433;font-weight:400;">2518</div>
<div class="b" style="left:1146.90px;top:486.00px;width:50.52px;height:22.50px;background:rgb(234, 246, 237)"></div>
<div class="t" style="left:1112.16px;width:120px;text-align:center;top:493.76px;font-size:9.5px;color:#1d2433;font-weight:400;">1608</div>
<div class="b" style="left:1198.42px;top:486.00px;width:50.52px;height:22.50px;background:rgb(245, 251, 247)"></div>
<div class="t" style="left:1163.68px;width:120px;text-align:center;top:493.76px;font-size:9.5px;color:#1d2433;font-weight:400;">1016</div>
<div class="b" style="left:1249.94px;top:486.00px;width:50.52px;height:22.50px;background:rgb(252, 254, 252)"></div>
<div class="t" style="left:1215.20px;width:120px;text-align:center;top:493.76px;font-size:9.5px;color:#1d2433;font-weight:400;">666</div>
<div class="b" style="left:1301.46px;top:486.00px;width:50.52px;height:22.50px;background:rgb(254, 254, 254)"></div>
<div class="t" style="left:1266.72px;width:120px;text-align:center;top:493.76px;font-size:9.5px;color:#1d2433;font-weight:400;">555</div>
<div class="t" style="left:-7.40px;width:120px;text-align:right;top:517.72px;font-size:10.85px;color:#262d3a;font-weight:400;-webkit-text-stroke:0.08px currentColor;">Sat</div>
<div class="b" style="left:116.50px;top:509.50px;width:50.52px;height:22.50px;background:rgb(252, 254, 252)"></div>
<div class="t" style="left:81.76px;width:120px;text-align:center;top:517.26px;font-size:9.5px;color:#1d2433;font-weight:400;">656</div>
<div class="b" style="left:168.02px;top:509.50px;width:50.52px;height:22.50px;background:rgb(251, 253, 251)"></div>
<div class="t" style="left:133.28px;width:120px;text-align:center;top:517.26px;font-size:9.5px;color:#1d2433;font-weight:400;">729</div>
<div class="b" style="left:219.54px;top:509.50px;width:50.52px;height:22.50px;background:rgb(243, 249, 244)"></div>
<div class="t" style="left:184.80px;width:120px;text-align:center;top:517.26px;font-size:9.5px;color:#1d2433;font-weight:400;">1164</div>
<div class="b" style="left:271.06px;top:509.50px;width:50.52px;height:22.50px;background:rgb(233, 245, 236)"></div>
<div class="t" style="left:236.32px;width:120px;text-align:center;top:517.26px;font-size:9.5px;color:#1d2433;font-weight:400;">1697</div>
<div class="b" style="left:322.58px;top:509.50px;width:50.52px;height:22.50px;background:rgb(212, 236, 218)"></div>
<div class="t" style="left:287.84px;width:120px;text-align:center;top:517.26px;font-size:9.5px;color:#1d2433;font-weight:400;">2791</div>
<div class="b" style="left:374.10px;top:509.50px;width:50.52px;height:22.50px;background:rgb(181, 222, 191)"></div>
<div class="t" style="left:339.36px;width:120px;text-align:center;top:517.26px;font-size:9.5px;color:#1d2433;font-weight:400;">4482</div>
<div class="b" style="left:425.62px;top:509.50px;width:50.52px;height:22.50px;background:rgb(142, 204, 158)"></div>
<div class="t" style="left:390.88px;width:120px;text-align:center;top:517.26px;font-size:9.5px;color:#1d2433;font-weight:400;">6584</div>
<div class="b" style="left:477.14px;top:509.50px;width:50.52px;height:22.50px;background:rgb(110, 190, 130)"></div>
<div class="t" style="left:442.40px;width:120px;text-align:center;top:517.26px;font-size:9.5px;color:#1d2433;font-weight:400;">8315</div>
<div class="b" style="left:528.66px;top:509.50px;width:50.52px;height:22.50px;background:rgb(115, 192, 134)"></div>
<div class="t" style="left:493.92px;width:120px;text-align:center;top:517.26px;font-size:9.5px;color:#1d2433;font-weight:400;">8075</div>
<div class="b" style="left:580.18px;top:509.50px;width:50.52px;height:22.50px;background:rgb(112, 191, 132)"></div>
<div class="t" style="left:545.44px;width:120px;text-align:center;top:517.26px;font-size:9.5px;color:#1d2433;font-weight:400;">8221</div>
<div class="b" style="left:631.70px;top:509.50px;width:50.52px;height:22.50px;background:rgb(87, 179, 110)"></div>
<div class="t" style="left:596.96px;width:120px;text-align:center;top:517.26px;font-size:9.5px;color:#1d2433;font-weight:400;">9598</div>
<div class="b" style="left:683.22px;top:509.50px;width:50.52px;height:22.50px;background:rgb(92, 181, 114)"></div>
<div class="t" style="left:648.48px;width:120px;text-align:center;top:517.26px;font-size:9.5px;color:#1d2433;font-weight:400;">9303</div>
<div class="b" style="left:734.74px;top:509.50px;width:50.52px;height:22.50px;background:rgb(144, 205, 159)"></div>
<div class="t" style="left:700.00px;width:120px;text-align:center;top:517.26px;font-size:9.5px;color:#1d2433;font-weight:400;">6509</div>
<div class="b" style="left:786.26px;top:509.50px;width:50.52px;height:22.50px;background:rgb(163, 213, 176)"></div>
<div class="t" style="left:751.52px;width:120px;text-align:center;top:517.26px;font-size:9.5px;color:#1d2433;font-weight:400;">5470</div>
<div class="b" style="left:837.78px;top:509.50px;width:50.52px;height:22.50px;background:rgb(166, 215, 178)"></div>
<div class="t" style="left:803.04px;width:120px;text-align:center;top:517.26px;font-size:9.5px;color:#1d2433;font-weight:400;">5330</div>
<div class="b" style="left:889.30px;top:509.50px;width:50.52px;height:22.50px;background:rgb(168, 216, 180)"></div>
<div class="t" style="left:854.56px;width:120px;text-align:center;top:517.26px;font-size:9.5px;color:#1d2433;font-weight:400;">5207</div>
<div class="b" style="left:940.82px;top:509.50px;width:50.52px;height:22.50px;background:rgb(178, 220, 188)"></div>
<div class="t" style="left:906.08px;width:120px;text-align:center;top:517.26px;font-size:9.5px;color:#1d2433;font-weight:400;">4678</div>
<div class="b" style="left:992.34px;top:509.50px;width:50.52px;height:22.50px;background:rgb(178, 220, 188)"></div>
<div class="t" style="left:957.60px;width:120px;text-align:center;top:517.26px;font-size:9.5px;color:#1d2433;font-weight:400;">4666</div>
<div class="b" style="left:1043.86px;top:509.50px;width:50.52px;height:22.50px;background:rgb(202, 231, 209)"></div>
<div class="t" style="left:1009.12px;width:120px;text-align:center;top:517.26px;font-size:9.5px;color:#1d2433;font-weight:400;">3375</div>
<div class="b" style="left:1095.38px;top:509.50px;width:50.52px;height:22.50px;background:rgb(211, 235, 217)"></div>
<div class="t" style="left:1060.64px;width:120px;text-align:center;top:517.26px;font-size:9.5px;color:#1d2433;font-weight:400;">2864</div>
<div class="b" style="left:1146.90px;top:509.50px;width:50.52px;height:22.50px;background:rgb(228, 243, 232)"></div>
<div class="t" style="left:1112.16px;width:120px;text-align:center;top:517.26px;font-size:9.5px;color:#1d2433;font-weight:400;">1960</div>
<div class="b" style="left:1198.42px;top:509.50px;width:50.52px;height:22.50px;background:rgb(245, 251, 247)"></div>
<div class="t" style="left:1163.68px;width:120px;text-align:center;top:517.26px;font-size:9.5px;color:#1d2433;font-weight:400;">1024</div>
<div class="b" style="left:1249.94px;top:509.50px;width:50.52px;height:22.50px;background:rgb(252, 254, 252)"></div>
<div class="t" style="left:1215.20px;width:120px;text-align:center;top:517.26px;font-size:9.5px;color:#1d2433;font-weight:400;">650</div>
<div class="b" style="left:1301.46px;top:509.50px;width:50.52px;height:22.50px;background:rgb(252, 254, 252)"></div>
<div class="t" style="left:1266.72px;width:120px;text-align:center;top:517.26px;font-size:9.5px;color:#1d2433;font-weight:400;">648</div>
<div class="t" style="left:-7.40px;width:120px;text-align:right;top:541.22px;font-size:10.85px;color:#262d3a;font-weight:400;-webkit-text-stroke:0.08px currentColor;">Sun</div>
<div class="b" style="left:116.50px;top:533.00px;width:50.52px;height:22.50px;background:rgb(249, 253, 250)"></div>
<div class="t" style="left:81.76px;width:120px;text-align:center;top:540.76px;font-size:9.5px;color:#1d2433;font-weight:400;">790</div>
<div class="b" style="left:168.02px;top:533.00px;width:50.52px;height:22.50px;background:rgb(250, 253, 251)"></div>
<div class="t" style="left:133.28px;width:120px;text-align:center;top:540.76px;font-size:9.5px;color:#1d2433;font-weight:400;">759</div>
<div class="b" style="left:219.54px;top:533.00px;width:50.52px;height:22.50px;background:rgb(248, 252, 249)"></div>
<div class="t" style="left:184.80px;width:120px;text-align:center;top:540.76px;font-size:9.5px;color:#1d2433;font-weight:400;">895</div>
<div class="b" style="left:271.06px;top:533.00px;width:50.52px;height:22.50px;background:rgb(237, 247, 240)"></div>
<div class="t" style="left:236.32px;width:120px;text-align:center;top:540.76px;font-size:9.5px;color:#1d2433;font-weight:400;">1456</div>
<div class="b" style="left:322.58px;top:533.00px;width:50.52px;height:22.50px;background:rgb(223, 241, 228)"></div>
<div class="t" style="left:287.84px;width:120px;text-align:center;top:540.76px;font-size:9.5px;color:#1d2433;font-weight:400;">2200</div>
<div class="b" style="left:374.10px;top:533.00px;width:50.52px;height:22.50px;background:rgb(201, 231, 208)"></div>
<div class="t" style="left:339.36px;width:120px;text-align:center;top:540.76px;font-size:9.5px;color:#1d2433;font-weight:400;">3419</div>
<div class="b" style="left:425.62px;top:533.00px;width:50.52px;height:22.50px;background:rgb(183, 223, 193)"></div>
<div class="t" style="left:390.88px;width:120px;text-align:center;top:540.76px;font-size:9.5px;color:#1d2433;font-weight:400;">4374</div>
<div class="b" style="left:477.14px;top:533.00px;width:50.52px;height:22.50px;background:rgb(171, 217, 183)"></div>
<div class="t" style="left:442.40px;width:120px;text-align:center;top:540.76px;font-size:9.5px;color:#1d2433;font-weight:400;">5029</div>
<div class="b" style="left:528.66px;top:533.00px;width:50.52px;height:22.50px;background:rgb(161, 213, 174)"></div>
<div class="t" style="left:493.92px;width:120px;text-align:center;top:540.76px;font-size:9.5px;color:#1d2433;font-weight:400;">5580</div>
<div class="b" style="left:580.18px;top:533.00px;width:50.52px;height:22.50px;background:rgb(159, 212, 172)"></div>
<div class="t" style="left:545.44px;width:120px;text-align:center;top:540.76px;font-size:9.5px;color:#1d2433;font-weight:400;">5700</div>
<div class="b" style="left:631.70px;top:533.00px;width:50.52px;height:22.50px;background:rgb(154, 209, 168)"></div>
<div class="t" style="left:596.96px;width:120px;text-align:center;top:540.76px;font-size:9.5px;color:#1d2433;font-weight:400;">5951</div>
<div class="b" style="left:683.22px;top:533.00px;width:50.52px;height:22.50px;background:rgb(153, 209, 167)"></div>
<div class="t" style="left:648.48px;width:120px;text-align:center;top:540.76px;font-size:9.5px;color:#1d2433;font-weight:400;">6025</div>
<div class="b" style="left:734.74px;top:533.00px;width:50.52px;height:22.50px;background:rgb(151, 208, 165)"></div>
<div class="t" style="left:700.00px;width:120px;text-align:center;top:540.76px;font-size:9.5px;color:#1d2433;font-weight:400;">6145</div>
<div class="b" style="left:786.26px;top:533.00px;width:50.52px;height:22.50px;background:rgb(153, 209, 167)"></div>
<div class="t" style="left:751.52px;width:120px;text-align:center;top:540.76px;font-size:9.5px;color:#1d2433;font-weight:400;">6028</div>
<div class="b" style="left:837.78px;top:533.00px;width:50.52px;height:22.50px;background:rgb(152, 209, 166)"></div>
<div class="t" style="left:803.04px;width:120px;text-align:center;top:540.76px;font-size:9.5px;color:#1d2433;font-weight:400;">6050</div>
<div class="b" style="left:889.30px;top:533.00px;width:50.52px;height:22.50px;background:rgb(159, 212, 172)"></div>
<div class="t" style="left:854.56px;width:120px;text-align:center;top:540.76px;font-size:9.5px;color:#1d2433;font-weight:400;">5687</div>
<div class="b" style="left:940.82px;top:533.00px;width:50.52px;height:22.50px;background:rgb(171, 217, 183)"></div>
<div class="t" style="left:906.08px;width:120px;text-align:center;top:540.76px;font-size:9.5px;color:#1d2433;font-weight:400;">5016</div>
<div class="b" style="left:992.34px;top:533.00px;width:50.52px;height:22.50px;background:rgb(177, 220, 188)"></div>
<div class="t" style="left:957.60px;width:120px;text-align:center;top:540.76px;font-size:9.5px;color:#1d2433;font-weight:400;">4717</div>
<div class="b" style="left:1043.86px;top:533.00px;width:50.52px;height:22.50px;background:rgb(198, 229, 206)"></div>
<div class="t" style="left:1009.12px;width:120px;text-align:center;top:540.76px;font-size:9.5px;color:#1d2433;font-weight:400;">3556</div>
<div class="b" style="left:1095.38px;top:533.00px;width:50.52px;height:22.50px;background:rgb(215, 237, 221)"></div>
<div class="t" style="left:1060.64px;width:120px;text-align:center;top:540.76px;font-size:9.5px;color:#1d2433;font-weight:400;">2646</div>
<div class="b" style="left:1146.90px;top:533.00px;width:50.52px;height:22.50px;background:rgb(232, 245, 235)"></div>
<div class="t" style="left:1112.16px;width:120px;text-align:center;top:540.76px;font-size:9.5px;color:#1d2433;font-weight:400;">1721</div>
<div class="b" style="left:1198.42px;top:533.00px;width:50.52px;height:22.50px;background:rgb(245, 250, 246)"></div>
<div class="t" style="left:1163.68px;width:120px;text-align:center;top:540.76px;font-size:9.5px;color:#1d2433;font-weight:400;">1037</div>
<div class="b" style="left:1249.94px;top:533.00px;width:50.52px;height:22.50px;background:rgb(252, 254, 252)"></div>
<div class="t" style="left:1215.20px;width:120px;text-align:center;top:540.76px;font-size:9.5px;color:#1d2433;font-weight:400;">664</div>
<div class="b" style="left:1301.46px;top:533.00px;width:50.52px;height:22.50px;background:rgb(253, 254, 253)"></div>
<div class="t" style="left:1266.72px;width:120px;text-align:center;top:540.76px;font-size:9.5px;color:#1d2433;font-weight:400;">610</div>
<div class="t" style="left:81.76px;width:120px;text-align:center;top:559.83px;font-size:10.6px;color:#262d3a;font-weight:400;-webkit-text-stroke:0.08px currentColor;">1:00</div>
<div class="t" style="left:184.80px;width:120px;text-align:center;top:559.83px;font-size:10.6px;color:#262d3a;font-weight:400;-webkit-text-stroke:0.08px currentColor;">3:00</div>
<div class="t" style="left:287.84px;width:120px;text-align:center;top:559.83px;font-size:10.6px;color:#262d3a;font-weight:400;-webkit-text-stroke:0.08px currentColor;">5:00</div>
<div class="t" style="left:390.88px;width:120px;text-align:center;top:559.83px;font-size:10.6px;color:#262d3a;font-weight:400;-webkit-text-stroke:0.08px currentColor;">7:00</div>
<div class="t" style="left:493.92px;width:120px;text-align:center;top:559.83px;font-size:10.6px;color:#262d3a;font-weight:400;-webkit-text-stroke:0.08px currentColor;">9:00</div>
<div class="t" style="left:596.96px;width:120px;text-align:center;top:559.83px;font-size:10.6px;color:#262d3a;font-weight:400;-webkit-text-stroke:0.08px currentColor;">11:00</div>
<div class="t" style="left:700.00px;width:120px;text-align:center;top:559.83px;font-size:10.6px;color:#262d3a;font-weight:400;-webkit-text-stroke:0.08px currentColor;">13:00</div>
<div class="t" style="left:803.04px;width:120px;text-align:center;top:559.83px;font-size:10.6px;color:#262d3a;font-weight:400;-webkit-text-stroke:0.08px currentColor;">15:00</div>
<div class="t" style="left:906.08px;width:120px;text-align:center;top:559.83px;font-size:10.6px;color:#262d3a;font-weight:400;-webkit-text-stroke:0.08px currentColor;">17:00</div>
<div class="t" style="left:1009.12px;width:120px;text-align:center;top:559.83px;font-size:10.6px;color:#262d3a;font-weight:400;-webkit-text-stroke:0.08px currentColor;">19:00</div>
<div class="t" style="left:1112.16px;width:120px;text-align:center;top:559.83px;font-size:10.6px;color:#262d3a;font-weight:400;-webkit-text-stroke:0.08px currentColor;">21:00</div>
<div class="t" style="left:1215.20px;width:120px;text-align:center;top:559.83px;font-size:10.6px;color:#262d3a;font-weight:400;-webkit-text-stroke:0.08px currentColor;">23:00</div>
<svg style="left:172.10px;top:103.00px" width="12" height="12" viewBox="0 0 24 24" fill="none" stroke="#555d6c" stroke-width="1.9" stroke-linecap="round" stroke-linejoin="round" ><circle cx="12" cy="12" r="9.4" stroke-width="1.8"/><path d="M12 16.6v-4.9" stroke-width="2.2"/><path d="M12 7.4h.01" stroke-width="2.5"/></svg>
<svg style="left:531.20px;top:103.00px" width="12" height="12" viewBox="0 0 24 24" fill="none" stroke="#555d6c" stroke-width="1.9" stroke-linecap="round" stroke-linejoin="round" ><circle cx="12" cy="12" r="9.4" stroke-width="1.8"/><path d="M12 16.6v-4.9" stroke-width="2.2"/><path d="M12 7.4h.01" stroke-width="2.5"/></svg>
<svg style="left:778.70px;top:103.00px" width="12" height="12" viewBox="0 0 24 24" fill="none" stroke="#555d6c" stroke-width="1.9" stroke-linecap="round" stroke-linejoin="round" ><circle cx="12" cy="12" r="9.4" stroke-width="1.8"/><path d="M12 16.6v-4.9" stroke-width="2.2"/><path d="M12 7.4h.01" stroke-width="2.5"/></svg>
<svg style="left:138.30px;top:201.00px" width="12" height="12" viewBox="0 0 24 24" fill="none" stroke="#555d6c" stroke-width="1.9" stroke-linecap="round" stroke-linejoin="round" ><circle cx="12" cy="12" r="9.4" stroke-width="1.8"/><path d="M12 16.6v-4.9" stroke-width="2.2"/><path d="M12 7.4h.01" stroke-width="2.5"/></svg>
<svg style="left:572.30px;top:201.00px" width="12" height="12" viewBox="0 0 24 24" fill="none" stroke="#555d6c" stroke-width="1.9" stroke-linecap="round" stroke-linejoin="round" ><circle cx="12" cy="12" r="9.4" stroke-width="1.8"/><path d="M12 16.6v-4.9" stroke-width="2.2"/><path d="M12 7.4h.01" stroke-width="2.5"/></svg>
<svg style="left:996.50px;top:201.00px" width="12" height="12" viewBox="0 0 24 24" fill="none" stroke="#555d6c" stroke-width="1.9" stroke-linecap="round" stroke-linejoin="round" ><circle cx="12" cy="12" r="9.4" stroke-width="1.8"/><path d="M12 16.6v-4.9" stroke-width="2.2"/><path d="M12 7.4h.01" stroke-width="2.5"/></svg>
<svg style="left:233.10px;top:344.40px" width="12" height="12" viewBox="0 0 24 24" fill="none" stroke="#555d6c" stroke-width="1.9" stroke-linecap="round" stroke-linejoin="round" ><circle cx="12" cy="12" r="9.4" stroke-width="1.8"/><path d="M12 16.6v-4.9" stroke-width="2.2"/><path d="M12 7.4h.01" stroke-width="2.5"/></svg>
<svg style="left:203.50px;top:130.10px" width="16" height="16" viewBox="0 0 24 24" fill="none" stroke="#e5484d" stroke-width="1.5" stroke-linecap="round" stroke-linejoin="round" ><path d="M12 5v14"/><path d="m19 12-7 7-7-7"/></svg>
<svg style="left:531.80px;top:130.10px" width="16" height="16" viewBox="0 0 24 24" fill="none" stroke="#4fb07a" stroke-width="1.5" stroke-linecap="round" stroke-linejoin="round" ><path d="m5 12 7-7 7 7"/><path d="M12 19V5"/></svg>
<svg style="left:94.00px;top:247.00px" width="16" height="16" viewBox="0 0 24 24" fill="none" stroke="#667085" stroke-width="1.5" stroke-linecap="round" stroke-linejoin="round" ><path d="m5 12 7-7 7 7"/><path d="M12 19V5"/></svg>
<svg style="left:543.70px;top:246.60px" width="16" height="16" viewBox="0 0 24 24" fill="none" stroke="#e5484d" stroke-width="1.5" stroke-linecap="round" stroke-linejoin="round" ><path d="M12 5v14"/><path d="m19 12-7 7-7-7"/></svg>
<svg style="left:989.60px;top:246.60px" width="16" height="16" viewBox="0 0 24 24" fill="none" stroke="#e5484d" stroke-width="1.5" stroke-linecap="round" stroke-linejoin="round" ><path d="M12 5v14"/><path d="m19 12-7 7-7-7"/></svg>
<div class="b" style="left:1040.30px;top:28.50px;width:182.60px;height:25.10px;background:#fff;border:1px solid #e8eaee;border-radius:6px"></div>
<div class="t" style="left:1070.50px;top:35.86px;font-size:9.5px;color:#252c39;font-weight:400;">All Channels</div>
<svg style="left:1052.00px;top:34.70px" width="11.70" height="11.70" viewBox="0 0 24 24"><path d="M11.7 0 C14.2 1.6 15.6 5 14.9 7.6 C14.4 9.2 13.2 10.5 12.2 11.5 L0 11.3 Z" fill="#f7d84a"/><path d="M0 11.3 L11.7 23 C14.6 20.5 15 17 14.4 14.6 C14 13.2 13.2 12.2 12.2 11.5 Z" fill="#3d8d63"/><path d="M0 11.3 C3.5 8.6 8.5 8.2 12.2 11.5 C8.6 14 3.6 14.2 0 11.3 Z" fill="#52b35c"/><circle cx="11.5" cy="3.2" r="1.0" fill="#2e7a5c"/></svg>
<svg style="left:1204.00px;top:34.40px" width="12" height="12" viewBox="0 0 24 24" fill="none" stroke="#8a919e" stroke-width="1.5" stroke-linecap="round" stroke-linejoin="round" ><path d="m6 9 6 6 6-6"/></svg>
<div class="b" style="left:1039.80px;top:57.10px;width:182.10px;height:171.40px;background:#fff;border-radius:6px;box-shadow:0 4px 10px rgba(16,24,40,0.10),0 0 0 1px rgba(16,24,40,0.04);overflow:hidden"></div>
<div class="b" style="left:1215.00px;top:57.60px;width:7.00px;height:170.40px;background:#f6f7f9;border-radius:0 6px 6px 0"></div>
<div class="b" style="left:1216.80px;top:58.50px;width:4.40px;height:53.50px;background:#737373;border-radius:2.2px"></div>
<div class="b" style="left:1039.8px;top:57.1px;width:175px;height:171.4px;overflow:hidden">
<div class="t" style="left:25.80px;top:10.78px;font-size:10.65px;color:#222937;-webkit-text-stroke:0.12px currentColor">All Channels</div>
<div class="t" style="left:25.80px;top:35.78px;font-size:10.65px;color:#222937;-webkit-text-stroke:0.12px currentColor">SAYA FB USA messenger</div>
<div class="t" style="left:25.80px;top:60.78px;font-size:10.65px;color:#222937;-webkit-text-stroke:0.12px currentColor">FB Mes SAYA.PK</div>
<div class="t" style="left:25.80px;top:85.78px;font-size:10.65px;color:#222937;-webkit-text-stroke:0.12px currentColor">SAYA FB feed USA</div>
<div class="t" style="left:25.80px;top:110.78px;font-size:10.65px;color:#222937;-webkit-text-stroke:0.12px currentColor">FB Comments</div>
<div class="t" style="left:25.80px;top:135.78px;font-size:10.65px;color:#222937;-webkit-text-stroke:0.12px currentColor">SAYA USA instagram Chat</div>
<div class="t" style="left:25.80px;top:160.78px;font-size:10.65px;color:#222937;-webkit-text-stroke:0.12px currentColor">Instagram Chat</div>
<svg style="left:10.20px;top:9.60px" width="12.20" height="12.20" viewBox="0 0 24 24"><path d="M11.7 0 C14.2 1.6 15.6 5 14.9 7.6 C14.4 9.2 13.2 10.5 12.2 11.5 L0 11.3 Z" fill="#f7d84a"/><path d="M0 11.3 L11.7 23 C14.6 20.5 15 17 14.4 14.6 C14 13.2 13.2 12.2 12.2 11.5 Z" fill="#3d8d63"/><path d="M0 11.3 C3.5 8.6 8.5 8.2 12.2 11.5 C8.6 14 3.6 14.2 0 11.3 Z" fill="#52b35c"/><circle cx="11.5" cy="3.2" r="1.0" fill="#2e7a5c"/></svg>
<svg style="left:7.20px;top:34.20px" width="14" height="14" viewBox="0 0 24 24" fill="none" stroke="#4a9ff5" stroke-width="2.1" stroke-linecap="round" stroke-linejoin="round" ><path d="M12 2.4C17.1 2.4 21.2 6.2 21.2 11.2C21.2 16.2 17.1 20 12 20C11 20 10 19.9 9.1 19.6L5.7 21.5V18.1C3.9 16.5 2.8 14 2.8 11.2C2.8 6.2 6.9 2.4 12 2.4Z"/><path d="M6.8 13.3L9.9 10.4L12.6 12.3L16.6 9.4"/></svg>
<svg style="left:7.20px;top:59.20px" width="14" height="14" viewBox="0 0 24 24" fill="none" stroke="#4a9ff5" stroke-width="2.1" stroke-linecap="round" stroke-linejoin="round" ><path d="M12 2.4C17.1 2.4 21.2 6.2 21.2 11.2C21.2 16.2 17.1 20 12 20C11 20 10 19.9 9.1 19.6L5.7 21.5V18.1C3.9 16.5 2.8 14 2.8 11.2C2.8 6.2 6.9 2.4 12 2.4Z"/><path d="M6.8 13.3L9.9 10.4L12.6 12.3L16.6 9.4"/></svg>
<svg style="left:7.20px;top:84.50px" width="14" height="14" viewBox="0 0 24 24" fill="none" stroke="#3b5ba8" stroke-width="2.1" stroke-linecap="round" stroke-linejoin="round" ><circle cx="12" cy="12" r="9.2"/><path d="M12.4 21.2V12.6C12.4 10.6 13.2 9.4 15.6 9.4"/><path d="M9.6 13.4H15"/></svg>
<svg style="left:7.20px;top:109.50px" width="14" height="14" viewBox="0 0 24 24" fill="none" stroke="#3b5ba8" stroke-width="2.1" stroke-linecap="round" stroke-linejoin="round" ><circle cx="12" cy="12" r="9.2"/><path d="M12.4 21.2V12.6C12.4 10.6 13.2 9.4 15.6 9.4"/><path d="M9.6 13.4H15"/></svg>
<svg style="left:6.80px;top:134.40px" width="14" height="14" viewBox="0 0 24 24" fill="none" stroke="#e24a64" stroke-width="2.0" stroke-linecap="round" stroke-linejoin="round" ><path d="M20 12A8 8 0 1 0 16 18.93L20.2 20.2L18.93 16A8 8 0 0 0 20 12Z"/></svg>
<svg style="left:6.80px;top:159.40px" width="14" height="14" viewBox="0 0 24 24" fill="none" stroke="#e24a64" stroke-width="2.0" stroke-linecap="round" stroke-linejoin="round" ><path d="M20 12A8 8 0 1 0 16 18.93L20.2 20.2L18.93 16A8 8 0 0 0 20 12Z"/></svg>
</div>
<div class="b" style="left:1034.00px;top:27.00px;width:200.00px;height:213.60px;border:4px solid #8c1a13"></div>
</body></html>
